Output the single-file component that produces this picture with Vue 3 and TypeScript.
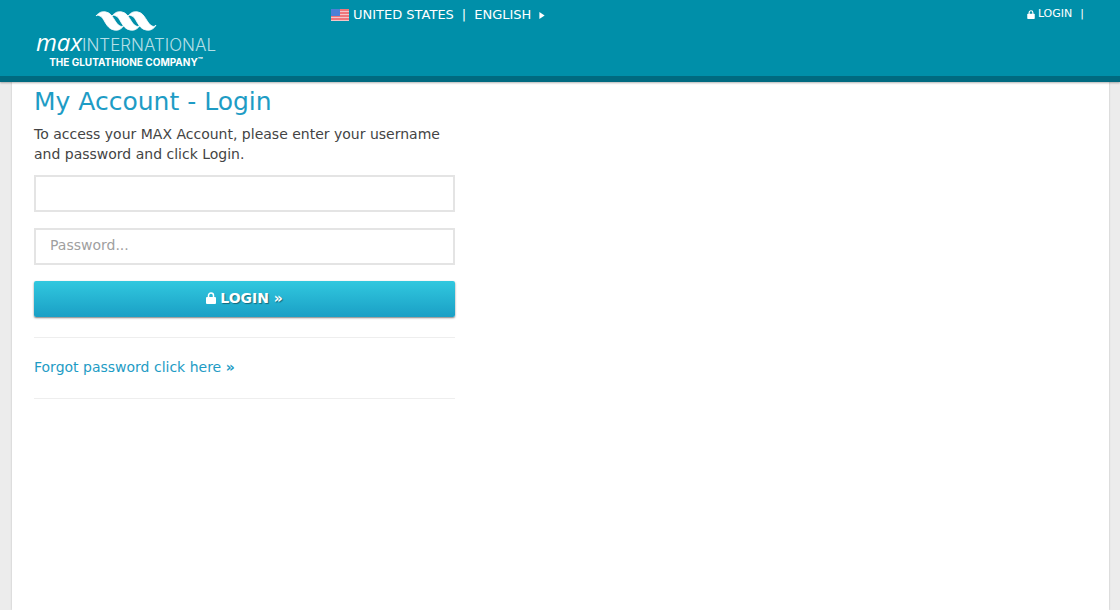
<script setup lang="ts">
import { ref } from 'vue'

const username = ref<string>('')
const password = ref<string>('')
</script>

<template>
  <div class="page">
    <header class="header">
      <a class="brand" href="#" aria-label="Max International home">
        <svg class="mark" viewBox="0 0 60 20" aria-hidden="true">
          <g fill="#fff" stroke="#fff" stroke-width="0.8" stroke-linejoin="round">
            <path d="M0 5C3 1 7 0 10 1C17 2 19 13 24 15C26 16 27 15 28 14C26 18 22 20 18 19C10 18 8 6 4 5C2 4 1 4 0 5Z" />
            <path d="M16 5C19 1 23 0 26 1C33 2 35 13 40 15C42 16 43 15 44 14C42 18 38 20 34 19C26 18 24 6 20 5C18 4 17 4 16 5Z" />
            <path d="M32 5C35 1 39 0 42 1C49 2 51 13 56 15C58 16 59 15 60 14C58 18 54 20 50 19C42 18 40 6 36 5C34 4 33 4 32 5Z" />
          </g>
        </svg>
        <span class="name"><b>max</b><span>INTERNATIONAL</span></span>
        <span class="tagline">THE GLUTATHIONE COMPANY<small>™</small></span>
      </a>
      <nav class="locale" aria-label="Country and language">
        <svg class="flag" viewBox="0 0 18 12" aria-hidden="true">
          <rect width="18" height="12" fill="#f4c5c9" />
          <path d="M0 1H18M0 4H18M0 7H18M0 10H18" stroke="#f0757a" stroke-width="2" />
          <rect width="9" height="7" fill="#4d7fd6" />
        </svg>
        <a href="#">UNITED STATES</a>
        <span class="bar">|</span>
        <a href="#">ENGLISH</a>
        <svg class="arrow" viewBox="0 0 6 8" aria-hidden="true"><path d="M0 0L6 4L0 8Z" fill="#fff" /></svg>
      </nav>
      <nav class="account" aria-label="Account">
        <a href="#">
          <svg class="lock" viewBox="0 0 10 12" aria-hidden="true">
            <path d="M2.5 6V3.5a2.5 2.5 0 0 1 5 0V6" fill="none" stroke="#fff" stroke-width="1.5" />
            <rect y="5" width="10" height="7" rx="1" fill="#fff" />
          </svg>
          <span>LOGIN</span>
        </a>
        <span class="bar">|</span>
      </nav>
    </header>
    <main class="panel">
      <section class="login">
        <h1>My Account - Login</h1>
        <p>To access your MAX Account, please enter your username and password and click Login.</p>
        <form @submit.prevent>
          <input v-model="username" type="text" aria-label="Username" autocomplete="username" />
          <input v-model="password" type="password" aria-label="Password" placeholder="Password..." autocomplete="current-password" />
          <button type="submit">
            <svg class="lock" viewBox="0 0 10 12" aria-hidden="true">
              <path d="M2.5 6V3.5a2.5 2.5 0 0 1 5 0V6" fill="none" stroke="#fff" stroke-width="1.5" />
              <rect y="5" width="10" height="7" rx="1" fill="#fff" />
            </svg>
            <span>LOGIN »</span>
          </button>
        </form>
        <div class="forgot"><a href="#">Forgot password click here <b>»</b></a></div>
      </section>
    </main>
  </div>
</template>

<style>
body {
  margin: 0;
  background: #ececec;
}
</style>

<style scoped>
.page {
  display: flex;
  flex-direction: column;
  min-height: 100vh;
  font-family: "DejaVu Sans", sans-serif;
  font-size: 14px;
  color: #444;
}
.header {
  position: relative;
  display: flex;
  align-items: flex-start;
  box-sizing: border-box;
  height: 82px;
  padding: 0 36px 0 34px;
  background: #008fa9;
  border-bottom: 6px solid #006a80;
  box-shadow: 0 1px 2px rgba(0, 0, 0, 0.3);
  color: #fff;
}
a {
  text-decoration: none;
}
.brand {
  display: flex;
  flex-direction: column;
  align-items: center;
  width: 184px;
  padding-top: 11px;
  color: #fff;
}
.mark {
  width: 60px;
  height: 20px;
  overflow: visible;
}
.name {
  display: flex;
  align-items: baseline;
  line-height: 22px;
  white-space: nowrap;
}
.name b {
  font: italic 400 24px/22px "Open Sans", sans-serif;
}
.name span {
  font: 300 17px/22px Inter, sans-serif;
  color: #b5dfe7;
}
.tagline {
  font: 700 10px/12px Inter, sans-serif;
  white-space: nowrap;
}
.tagline small {
  font-size: 8px;
  line-height: 8px;
  vertical-align: top;
}
.locale,
.account,
.account a {
  display: flex;
  align-items: center;
}
.locale {
  margin-left: 113px;
  padding-top: 7px;
  font-size: 13px;
  line-height: 16px;
}
.header nav a {
  color: #fff;
}
.flag {
  width: 18px;
  height: 12px;
  margin-right: 4px;
}
.locale .bar {
  margin: 0 8px;
}
.arrow {
  width: 6px;
  height: 7px;
  margin-left: 8px;
}
.account {
  gap: 8px;
  margin-left: auto;
  padding-top: 6px;
  font-size: 11px;
  line-height: 16px;
}
.account a {
  gap: 3px;
}
.account .lock {
  width: 8px;
  height: 9px;
}
.panel {
  flex: 1;
  margin: 0 11px 0 12px;
  padding: 6px 22px;
  background: #fff;
  box-shadow: 0 0 2px rgba(0, 0, 0, 0.2);
}
.login {
  width: 40%;
}
h1 {
  margin: 0 0 8px;
  font-size: 25px;
  font-weight: 400;
  line-height: 28px;
  color: #1e9cc5;
}
p {
  margin: 0 0 11px;
  line-height: 20px;
}
form {
  display: flex;
  flex-direction: column;
  gap: 16px;
}
input {
  box-sizing: border-box;
  width: 100%;
  height: 37px;
  padding: 0 14px 4px;
  border: 2px solid #e4e4e4;
  background: #fff;
  font: inherit;
  color: #444;
}
input::placeholder {
  color: #a0a0a0;
  opacity: 1;
}
button {
  display: flex;
  align-items: center;
  justify-content: center;
  gap: 4px;
  height: 36px;
  padding: 0 0 2px;
  border: 0;
  border-radius: 2px;
  background: linear-gradient(#31c8df, #1a9fc5);
  box-shadow: 0 1px 2px rgba(0, 0, 0, 0.5);
  font: 700 14px/20px "DejaVu Sans", sans-serif;
  color: #fff;
  text-shadow: 1px 1px 1px rgba(0, 0, 0, 0.4);
}
button .lock {
  width: 10px;
  height: 12px;
}
.forgot {
  margin-top: 20px;
  padding: 19px 0 21px;
  border: solid #eee;
  border-width: 1px 0;
  line-height: 20px;
}
.forgot a {
  color: #1e9cc5;
}
</style>
